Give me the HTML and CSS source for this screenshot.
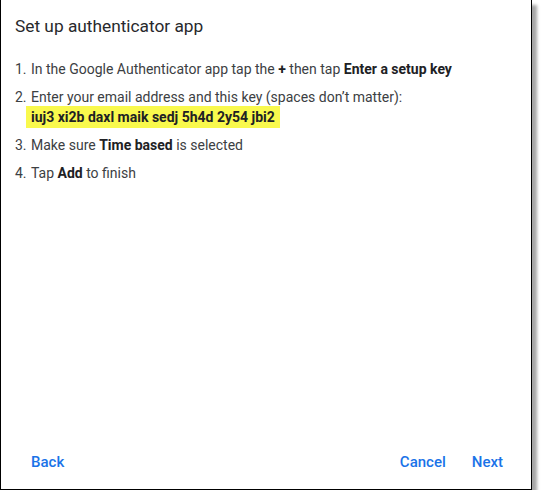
FILE: index.html
```html
<!DOCTYPE html>
<html>
<head>
<meta charset="utf-8">
<link rel="stylesheet" href="styles.css">
</head>
<body>
<div class="dialog">
  <h1 class="title">Set up authenticator app</h1>
  <ol class="steps">
    <li class="step"><span class="num">1.</span><div class="body">In the Google Authenticator app tap the <b>+</b> then tap <b>Enter a setup key</b></div></li>
    <li class="step"><span class="num">2.</span><div class="body">Enter your email address and this key (spaces don’t matter):<br><span class="key">iuj3 xi2b daxl maik sedj 5h4d 2y54 jbi2</span></div></li>
    <li class="step"><span class="num">3.</span><div class="body">Make sure <b>Time based</b> is selected</div></li>
    <li class="step"><span class="num">4.</span><div class="body">Tap <b>Add</b> to finish</div></li>
  </ol>
  <div class="spacer"></div>
  <div class="actions">
    <button class="btn">Back</button>
    <div class="right">
      <button class="btn">Cancel</button>
      <button class="btn">Next</button>
    </div>
  </div>
</div>
</body>
</html>
```
FILE: styles.css
```css
html, body {
  margin: 0;
  padding: 0;
  background: #ffffff;
}
body {
  font-family: Roboto, "Liberation Sans", sans-serif;
  color: #202124;
}
.dialog {
  box-sizing: border-box;
  width: 532px;
  height: 490px;
  background: #fff;
  border: 1px solid #000;
  border-top: none;
  box-shadow: 5px 5px 3px rgba(0, 0, 0, 0.35);
  display: flex;
  flex-direction: column;
  padding: 14px 0 0 14px;
}
.title {
  margin: 0;
  font-size: 17.3px;
  font-weight: 400;
  line-height: 24px;
  color: #28292c;
}
.steps {
  list-style: none;
  margin: 21px 0 0 0;
  padding: 0;
  font-size: 14px;
  line-height: 20px;
  color: #3c4043;
}
.step {
  display: flex;
  margin-bottom: 8px;
}
.num {
  width: 16px;
  flex: none;
}
.body b {
  font-weight: 700;
  color: #202124;
}
.key {
  background: #f9f94d;
  font-weight: 700;
  color: #202124;
  padding: 3px 5px 3px 5px;
  margin-left: -5px;
}
.spacer {
  flex: 1;
}
.actions {
  display: flex;
  justify-content: space-between;
  align-items: center;
  padding: 0 28px 17px 16px;
}
.right {
  display: flex;
  gap: 26px;
}
.btn {
  background: none;
  border: none;
  font-family: Roboto, "Liberation Sans", sans-serif;
  font-size: 15px;
  font-weight: 500;
  color: #1a73e8;
  padding: 0;
  line-height: 20px;
}
```
